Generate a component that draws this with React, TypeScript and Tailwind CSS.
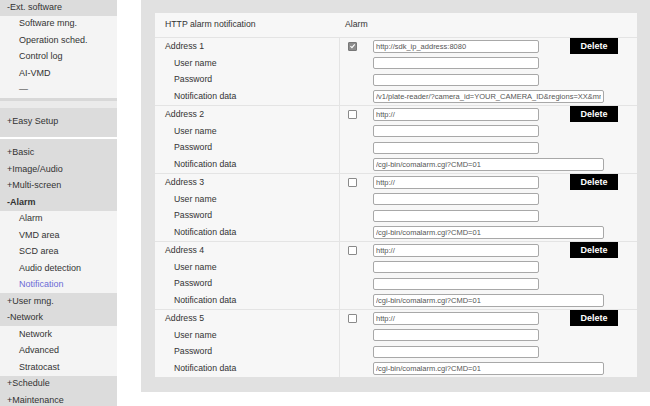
import type { ReactNode } from "react";

type NavRow = { label: string; kind: "head" | "sub"; bold?: boolean; active?: boolean };

const font = { fontFamily: '"Liberation Sans", Arial, sans-serif' };

const addresses = [
  { n: 1, url: "http://sdk_ip_address:8080", data: "/v1/plate-reader/?camera_id=YOUR_CAMERA_ID&regions=XX&mmc=true", checked: true },
  { n: 2, url: "http://", data: "/cgi-bin/comalarm.cgi?CMD=01", checked: false },
  { n: 3, url: "http://", data: "/cgi-bin/comalarm.cgi?CMD=01", checked: false },
  { n: 4, url: "http://", data: "/cgi-bin/comalarm.cgi?CMD=01", checked: false },
  { n: 5, url: "http://", data: "/cgi-bin/comalarm.cgi?CMD=01", checked: false },
];

function Row({ row }: { row: NavRow }) {
  if (row.kind === "head") {
    return (
      <div className={`flex h-[16.5px] items-center pl-[7px] text-[#333] ${row.bold ? "font-bold" : ""}`}>
        {row.label}
      </div>
    );
  }
  return (
    <div className={`flex h-[16.5px] items-center pl-[19px] ${row.active ? "text-[#6b6bd6]" : "text-[#333]"}`}>
      {row.label}
    </div>
  );
}

function Group({ children, tone }: { children: ReactNode; tone: "dark" | "light" }) {
  return <div className={tone === "dark" ? "bg-[#dcdcdc]" : "bg-[#f4f4f4]"}>{children}</div>;
}

function Sidebar() {
  return (
    <aside className="w-[117px] shrink-0 text-[9px]">
      <Group tone="dark">
        <div className="flex h-[15.5px] items-center pl-[7px] text-[#333]">-Ext. software</div>
      </Group>
      <Group tone="light">
        {["Software mng.", "Operation sched.", "Control log", "AI-VMD", "—"].map((l) => (
          <Row key={l} row={{ label: l, kind: "sub" }} />
        ))}
      </Group>
      <div className="h-[3px] bg-[#d8d8d8]" />
      <div className="h-[6.5px] bg-[#ebebeb]" />
      <div className="flex h-[29px] items-center bg-[#dcdcdc] pl-[7px] text-[#333]">+Easy Setup</div>
      <div className="h-[2px] bg-white" />
      <Group tone="dark">
        <div className="h-[6px]" />
        <Row row={{ label: "+Basic", kind: "head" }} />
        <Row row={{ label: "+Image/Audio", kind: "head" }} />
        <Row row={{ label: "+Multi-screen", kind: "head" }} />
        <Row row={{ label: "-Alarm", kind: "head", bold: true }} />
      </Group>
      <Group tone="light">
        <Row row={{ label: "Alarm", kind: "sub" }} />
        <Row row={{ label: "VMD area", kind: "sub" }} />
        <Row row={{ label: "SCD area", kind: "sub" }} />
        <Row row={{ label: "Audio detection", kind: "sub" }} />
        <Row row={{ label: "Notification", kind: "sub", active: true }} />
      </Group>
      <Group tone="dark">
        <Row row={{ label: "+User mng.", kind: "head" }} />
        <Row row={{ label: "-Network", kind: "head" }} />
      </Group>
      <Group tone="light">
        <Row row={{ label: "Network", kind: "sub" }} />
        <Row row={{ label: "Advanced", kind: "sub" }} />
        <Row row={{ label: "Stratocast", kind: "sub" }} />
      </Group>
      <Group tone="dark">
        <Row row={{ label: "+Schedule", kind: "head" }} />
        <Row row={{ label: "+Maintenance", kind: "head" }} />
      </Group>
    </aside>
  );
}

function Field({ value, wide }: { value?: string; wide?: boolean }) {
  return (
    <input
      readOnly
      value={value ?? ""}
      style={font}
      className={`h-[12.5px] rounded-[2px] border border-[#a8a8a8] bg-white px-[2px] text-[7.5px] text-[#555] outline-none ${wide ? "w-[231px]" : "w-[166px]"}`}
    />
  );
}

function Check({ on }: { on: boolean }) {
  if (on) {
    return (
      <span className="flex h-[9px] w-[9px] items-center justify-center rounded-[1px] border border-[#777] bg-[#8c8c8c]">
        <svg viewBox="0 0 10 10" className="h-[8px] w-[8px]">
          <path d="M2 5.2 L4.2 7.3 L8.2 2.6" fill="none" stroke="#fff" strokeWidth="1.6" />
        </svg>
      </span>
    );
  }
  return <span className="h-[9px] w-[9px] rounded-[1px] border border-[#8a8a8a] bg-white" />;
}

function AddressBlock({ a }: { a: (typeof addresses)[number] }) {
  const sub = "flex h-[16.75px] items-center";
  return (
    <div className="flex border-t border-[#e4e4e4]">
      <div className="w-[185px] shrink-0 border-r border-[#e4e4e4] pl-[10px] text-[#333]">
        <div className={sub}>Address {a.n}</div>
        <div className={`${sub} pl-[9px]`}>User name</div>
        <div className={`${sub} pl-[9px]`}>Password</div>
        <div className={`${sub} pl-[9px]`}>Notification data</div>
      </div>
      <div className="w-[30px] shrink-0">
        <div className={`${sub} pl-[8px]`}>
          <Check on={a.checked} />
        </div>
      </div>
      <div className="flex-1 pl-[3px]">
        <div className={sub}>
          <Field value={a.url} />
          <button
            style={font}
            className="ml-[31px] h-[16px] w-[48px] bg-black text-[9px] font-bold text-white"
          >
            Delete
          </button>
        </div>
        <div className={sub}>
          <Field />
        </div>
        <div className={sub}>
          <Field />
        </div>
        <div className={sub}>
          <Field value={a.data} wide />
        </div>
      </div>
    </div>
  );
}

export default function App() {
  return (
    <div className="flex h-[406px] w-[650px] overflow-hidden bg-white" style={font}>
      <Sidebar />
      <main className="ml-[24px] flex-1 self-start bg-[#e1e1e1] pb-[15px] pl-[14px] pr-[13px] pt-[13px]">
        <div className="bg-[#f7f7f7] text-[8.7px]">
          <div className="flex h-[24px] items-center text-[#333]">
            <div className="w-[185px] shrink-0 pl-[10px]">HTTP alarm notification</div>
            <div className="pl-[5px]">Alarm</div>
          </div>
          {addresses.map((a) => (
            <AddressBlock key={a.n} a={a} />
          ))}
        </div>
      </main>
    </div>
  );
}
